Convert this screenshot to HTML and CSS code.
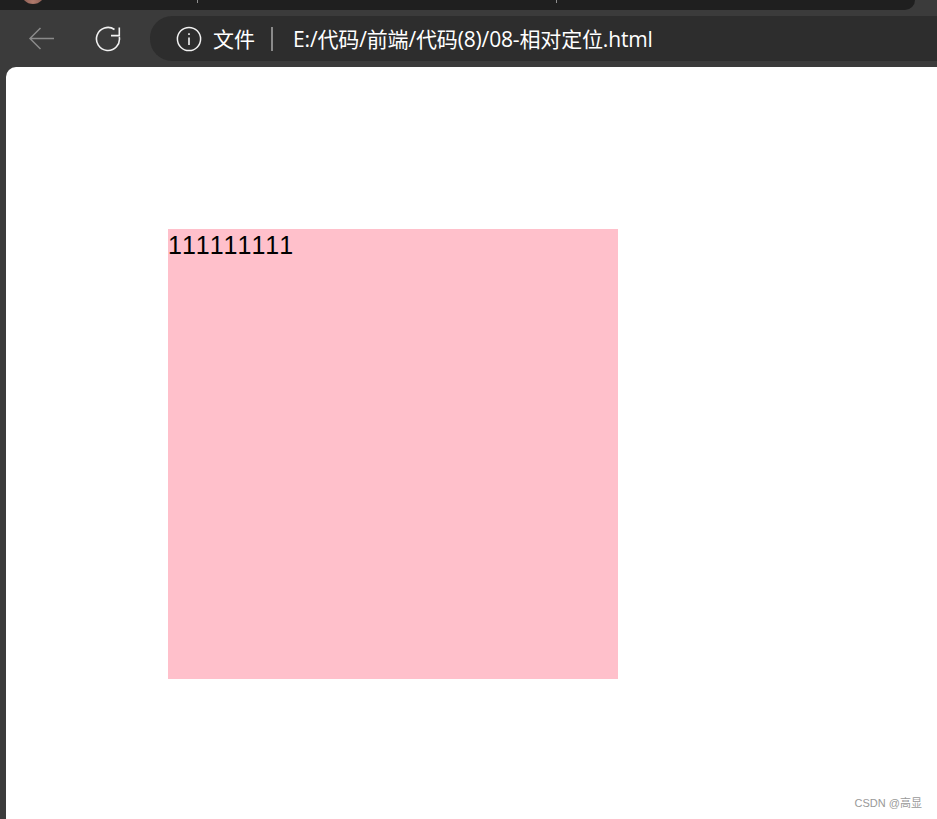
FILE: index.html
```html
<!DOCTYPE html>
<html lang="zh-CN">
<head>
  <meta charset="UTF-8" />
  <meta name="viewport" content="width=device-width, initial-scale=1.0"/>
  <title>08-相对定位</title>
  <link rel="stylesheet" href="styles.css">
</head>
<body>

  <!-- Tab strip, cut off by the top of the screenshot -->
  <div class="tabstrip">
    <div class="tabs">
      <div class="avatar"></div>
      <div class="tab-sep sep-first"></div>
      <div class="tab-sep sep-second"></div>
    </div>
  </div>

  <div class="toolbar">
    <button class="nav-btn back" aria-label="back">
      <svg width="28" height="24" viewBox="0 0 28 24" fill="none" stroke="#8a8a8a" stroke-width="1.5">
        <path d="M26 11.5H2M12.5 1 2 11.5 12.5 22"/>
      </svg>
    </button>
    <button class="nav-btn reload" aria-label="reload">
      <svg width="26" height="26" viewBox="0 0 26 26" fill="none" stroke="#f2f2f2" stroke-width="1.6">
        <path d="M24.3 11A11.5 11.5 0 1 1 19.5 3.5"/>
        <path d="M16 9.6h8.3V1.5"/>
      </svg>
    </button>
    <div class="address">
      <svg class="info" width="26" height="26" viewBox="0 0 26 26" fill="none" stroke="#f2f2f2">
        <circle cx="13" cy="13" r="11.6" stroke-width="1.5"/>
        <path d="M13 11.5v7.5" stroke-width="1.6"/>
        <path d="M13 7.2v1.8" stroke-width="1.6"/>
      </svg>
      <span class="file-label">文件</span>
      <span class="addr-sep"></span>
      <span class="url">E:/代码/前端/代码(8)/08-相对定位.html</span>
    </div>
  </div>

  <div class="content">
    <div class="page">
      <div class="box">111111111</div>
      <span class="watermark">CSDN @高显</span>
    </div>
  </div>

</body>
</html>
```

FILE: styles.css
```css
* {
  box-sizing: border-box;
}

html, body {
  margin: 0;
  padding: 0;
  height: 100%;
  overflow: hidden;
  background-color: #3b3b3b;
}

body {
  display: flex;
  flex-direction: column;
  font-family: "Open Sans", "Noto Sans CJK SC", sans-serif;
}

.tabstrip {
  height: 10px;
  flex-shrink: 0;
  padding-right: 22px;
}

.tabs {
  position: relative;
  height: 100%;
  background: #1f1f1f;
  border-bottom-right-radius: 10px;
  overflow: hidden;
}

.avatar {
  position: absolute;
  left: 21px;
  top: -20px;
  width: 24px;
  height: 24px;
  border-radius: 50%;
  background: radial-gradient(circle at 50% 90%, #b07a6c 0, #7a5048 60%, #4a3532 100%);
}

.tab-sep {
  position: absolute;
  top: 0;
  width: 1px;
  height: 3px;
  background: #8f8f8f;
}

.sep-first {
  left: 197px;
}

.sep-second {
  left: 556px;
}

.toolbar {
  height: 57px;
  flex-shrink: 0;
  display: flex;
  align-items: center;
  padding: 6px 0 6px 28px;
}

.nav-btn {
  display: flex;
  align-items: center;
  justify-content: center;
  padding: 0;
  border: 0;
  background: none;
}

.nav-btn.back {
  width: 28px;
  margin-right: 39px;
}

.nav-btn.reload {
  width: 26px;
  margin-right: 29px;
}

.address {
  flex: 1;
  height: 45px;
  display: flex;
  align-items: center;
  padding-left: 26px;
  background: #2d2d2d;
  border-radius: 22px 0 0 22px;
  color: #fff;
  font-size: 21px;
}

.info {
  margin-right: 11px;
}

.file-label {
  margin-bottom: 2px;
}

.addr-sep {
  width: 2px;
  height: 24px;
  margin: 0 20px 0 16px;
  background: #8a8a8a;
}

.url {
  margin-bottom: 2px;
  letter-spacing: -0.15px;
}

.content {
  flex: 1;
  min-height: 0;
  padding-left: 6px;
}

.page {
  position: relative;
  height: 100%;
  padding: 162px 0 0 162px;
  background: #fff;
  border-top-left-radius: 10px;
}

.box {
  width: 450px;
  height: 450px;
  background: pink;
  color: #000;
  font-family: "Liberation Sans", Arial, sans-serif;
  font-size: 25px;
  font-kerning: none;
  line-height: 32px;
}

.watermark {
  position: absolute;
  right: 15px;
  bottom: 9px;
  color: #999;
  font-family: "Liberation Sans", "Noto Sans CJK SC", sans-serif;
  font-size: 11px;
}
```
